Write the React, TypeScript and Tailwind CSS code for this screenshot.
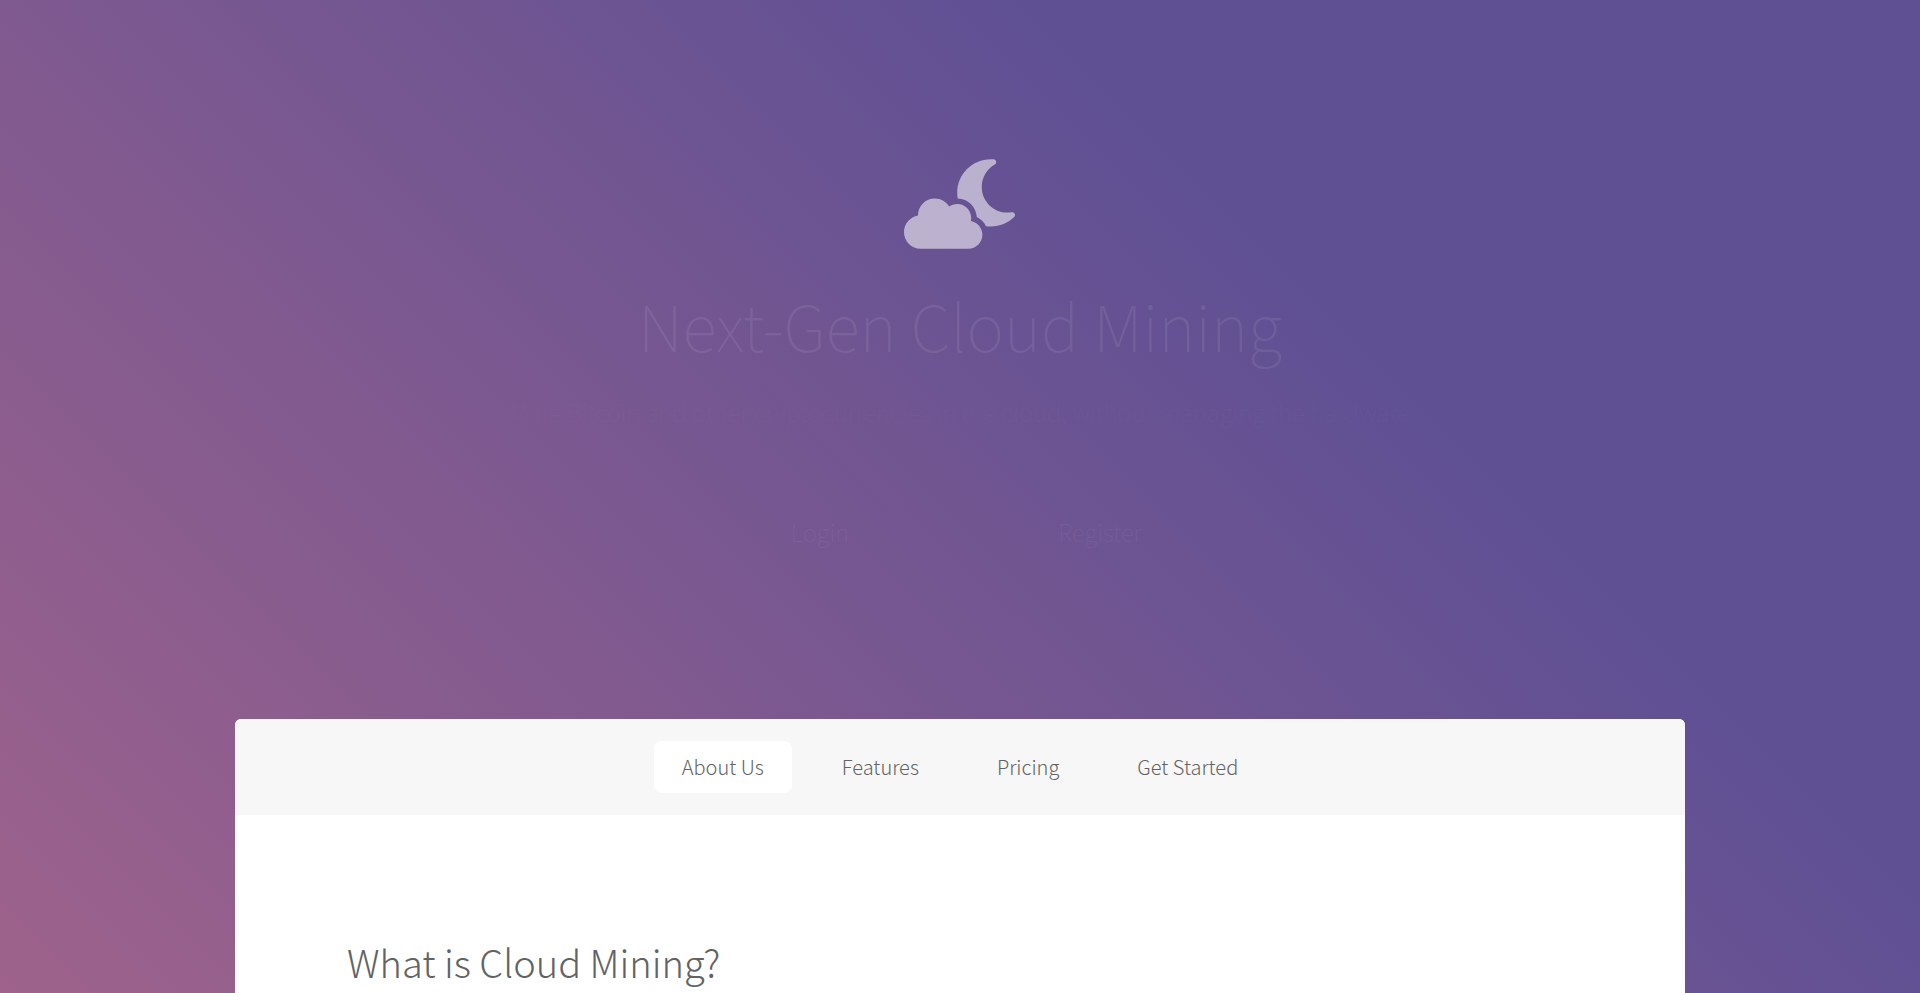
import React from 'react';
import { FaCloudMoon } from 'react-icons/fa6';

interface NavLink {
  label: string;
  href: string;
}

const navLinks: NavLink[] = [
  { label: 'About Us', href: '#about' },
  { label: 'Features', href: '#features' },
  { label: 'Pricing', href: '#pricing' },
  { label: 'Get Started', href: '#start' },
];

const Header: React.FC = () => (
  <header className="flex flex-col items-center px-6 pt-[148px] pb-[169px] text-center">
    <FaCloudMoon className="text-[112px] text-white/55" aria-hidden="true" />

    <div className="flex flex-col items-center text-white">
      <h1 className="mt-4 text-[64px] leading-[96px] font-thin opacity-8">Next-Gen Cloud Mining</h1>
      <p className="mt-[22px] text-2xl leading-9 font-thin opacity-2">
        Mine Bitcoin and other cryptocurrencies in the cloud, without managing the hardware
      </p>
      <div className="mt-[84px] flex text-2xl leading-9 font-thin opacity-5">
        <a href="#login" className="w-[280px]">Login</a>
        <a href="#register" className="w-[280px]">Register</a>
      </div>
    </div>
  </header>
);

const Nav: React.FC = () => (
  <nav className="rounded-t-md bg-[#f7f7f7] py-[22px]">
    <ul className="flex flex-wrap justify-center gap-[22px]">
      {navLinks.map((link, i) => (
        <li key={link.href}>
          <a
            href={link.href}
            className={`block rounded-lg px-7 text-xl leading-[52px] ${i === 0 ? 'bg-white' : ''}`}
          >
            {link.label}
          </a>
        </li>
      ))}
    </ul>
  </nav>
);

export default function App() {
  return (
    <div className="flex min-h-screen flex-col bg-[linear-gradient(45deg,#e37682_-76%,#5f5094_69%)] font-['Noto_Sans_CJK_JP',sans-serif] font-light">
      <Header />
      <div className="mx-auto w-full max-w-[1450px] grow rounded-t-md bg-white text-[#636363]">
        <Nav />
        <main>
          <section id="about" className="px-28 pt-[118px]">
            <h2 className="text-[38px] leading-[58px]">What is Cloud Mining?</h2>
          </section>
        </main>
      </div>
    </div>
  );
}
